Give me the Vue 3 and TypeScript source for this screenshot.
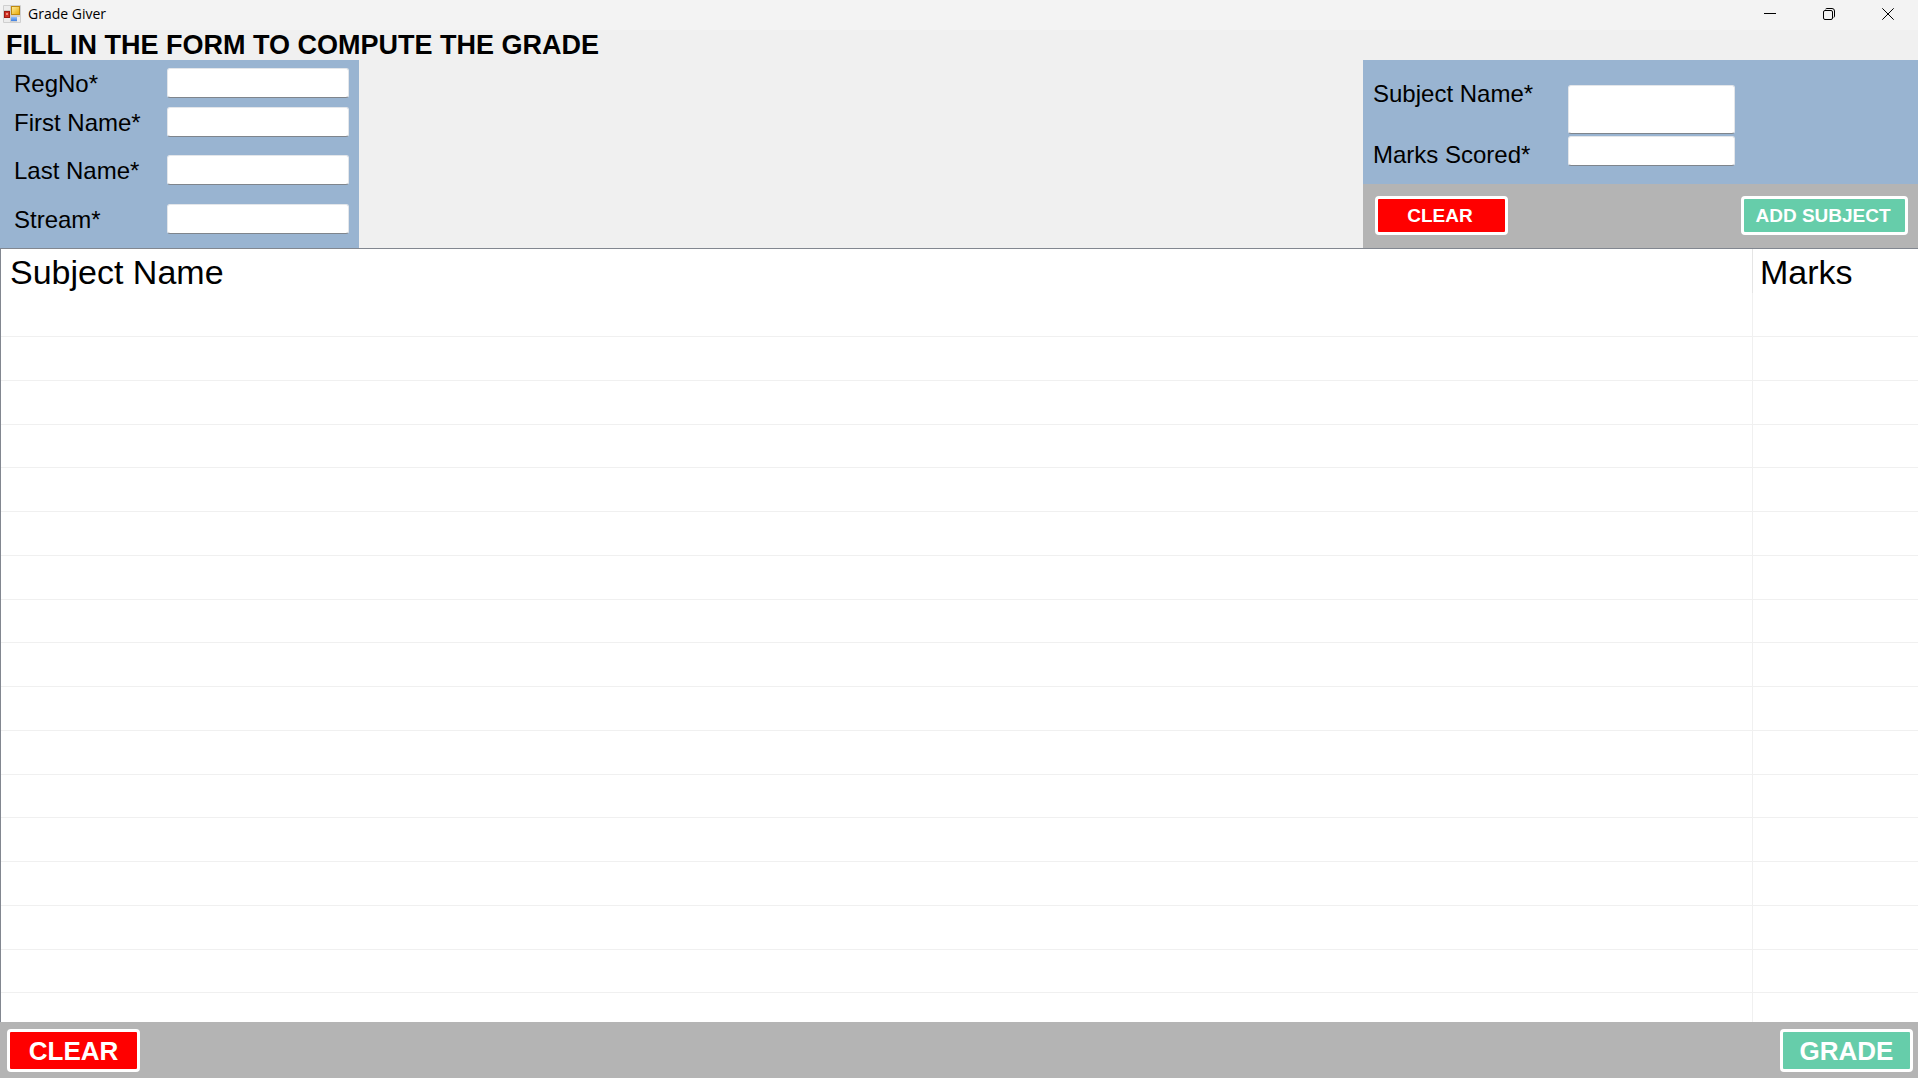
<script setup lang="ts">
import { reactive } from 'vue'

interface Field {
  id: 'regNo' | 'firstName' | 'lastName' | 'stream'
  label: string
}

const fields: Field[] = [
  { id: 'regNo', label: 'RegNo*' },
  { id: 'firstName', label: 'First Name*' },
  { id: 'lastName', label: 'Last Name*' },
  { id: 'stream', label: 'Stream*' },
]

const student = reactive({ regNo: '', firstName: '', lastName: '', stream: '' })
const subject = reactive({ name: '', marks: '' })
const subjects = reactive<{ name: string; marks: string }[]>([])
const rowCount = 17

function clearSubject() {
  subject.name = ''
  subject.marks = ''
}

function addSubject() {
  if (!subject.name || !subject.marks) return
  subjects.push({ name: subject.name, marks: subject.marks })
  clearSubject()
}

function clearAll() {
  Object.assign(student, { regNo: '', firstName: '', lastName: '', stream: '' })
  subjects.splice(0)
  clearSubject()
}
</script>

<template>
  <div class="window">
    <header class="titlebar">
      <svg class="app-icon" width="18" height="18" viewBox="0 0 18 18" aria-hidden="true">
        <defs>
          <linearGradient id="gold" x1="0" y1="0" x2="1" y2="1">
            <stop offset="0" stop-color="#fff0a0" />
            <stop offset="1" stop-color="#e8a800" />
          </linearGradient>
          <linearGradient id="sky" x1="0" y1="0" x2="0" y2="1">
            <stop offset="0" stop-color="#8fc0ff" />
            <stop offset="1" stop-color="#3f7fe0" />
          </linearGradient>
        </defs>
        <rect width="18" height="18" rx="1" fill="#cfcfcf" />
        <rect x="1" y="1" width="6" height="4" fill="#ececec" />
        <rect x="1" y="13" width="6" height="4" fill="#ececec" />
        <rect x="14" y="12" width="3" height="5" fill="#ececec" />
        <rect x="1.500" y="6.500" width="5" height="6" fill="#d03024" stroke="#9c1c14" />
        <rect x="3" y="8" width="2" height="2" fill="#f09080" />
        <rect x="8.500" y="1.500" width="8" height="8" fill="url(#gold)" stroke="#c08a10" />
        <rect x="8" y="12" width="6" height="4" fill="url(#sky)" />
      </svg>
      <span class="caption">Grade Giver</span>
      <div class="controls">
        <button type="button" aria-label="Minimize">
          <svg width="12" height="12" viewBox="0 0 12 12"><path d="M0 5.500H12" /></svg>
        </button>
        <button type="button" aria-label="Restore">
          <svg width="12" height="12" viewBox="0 0 12 12">
            <rect x="0.500" y="2.500" width="9" height="9" rx="1.500" />
            <path d="M2.500 1.200Q3 .5 4 .5H9Q11.500 .5 11.500 3V8Q11.500 9 10.800 9.500" />
          </svg>
        </button>
        <button type="button" aria-label="Close">
          <svg width="12" height="12" viewBox="0 0 12 12"><path d="M.3 .3L11.700 11.700M11.700 .3L.3 11.700" /></svg>
        </button>
      </div>
    </header>

    <h1>FILL IN THE FORM TO COMPUTE THE GRADE</h1>

    <div class="forms">
      <form class="student" @submit.prevent>
        <div v-for="field in fields" :key="field.id" class="field">
          <label :for="field.id">{{ field.label }}</label>
          <input :id="field.id" v-model="student[field.id]" type="text" />
        </div>
      </form>

      <form class="subject" @submit.prevent="addSubject">
        <div class="subject-fields">
          <label for="subjectName">Subject Name*</label>
          <textarea id="subjectName" v-model="subject.name"></textarea>
          <label class="marks-label" for="marks">Marks Scored*</label>
          <input id="marks" v-model="subject.marks" type="text" />
        </div>
        <div class="subject-actions">
          <button type="button" class="btn small red" @click="clearSubject">CLEAR</button>
          <button type="submit" class="btn small wide green">ADD SUBJECT</button>
        </div>
      </form>
    </div>

    <main class="list">
      <table>
        <thead>
          <tr>
            <th scope="col">Subject Name</th>
            <th scope="col" class="marks">Marks</th>
          </tr>
        </thead>
        <tbody>
          <tr v-for="n in rowCount" :key="n">
            <td>{{ subjects[n - 1]?.name }}</td>
            <td class="marks">{{ subjects[n - 1]?.marks }}</td>
          </tr>
        </tbody>
      </table>
    </main>

    <footer>
      <button type="button" class="btn red" @click="clearAll">CLEAR</button>
      <button type="button" class="btn green">GRADE</button>
    </footer>
  </div>
</template>

<style>
body {
  margin: 0;
  background: #f0f0f0;
}
</style>

<style scoped>
.window {
  display: flex;
  flex-direction: column;
  height: 100vh;
  background: #f0f0f0;
  color: #000;
  font-family: "Liberation Sans", Arial, sans-serif;
}

.window * {
  box-sizing: border-box;
}

.titlebar {
  display: flex;
  flex: none;
  align-items: center;
  height: 30px;
  padding: 0 1px 2px 3px;
  background: #f3f3f3;
}

.app-icon {
  margin-right: 7px;
}

.caption {
  font: 14px/28px "Open Sans", "Noto Sans", sans-serif;
}

.controls {
  display: flex;
  gap: 1px;
  margin-left: auto;
}

.controls button {
  display: flex;
  align-items: center;
  justify-content: center;
  width: 58px;
  height: 28px;
  padding: 0;
  border: 0;
  background: none;
}

.controls svg {
  fill: none;
  stroke: #000;
}

h1 {
  flex: none;
  margin: 0;
  padding-left: 6px;
  font-size: 27px;
  font-weight: 700;
  line-height: 30px;
}

.forms {
  display: flex;
  flex: none;
  justify-content: space-between;
}

.student {
  display: grid;
  grid-template-rows: 39px 48px 49px 52px;
  width: 359px;
  padding-left: 14px;
  background: #99b4d1;
}

.field {
  display: flex;
  align-items: flex-start;
  padding-top: 8px;
}

label {
  font-size: 24px;
  line-height: 32px;
}

.field label {
  width: 153px;
}

input,
textarea {
  display: block;
  height: 30px;
  padding: 2px 4px;
  border: 1px solid #e3e6ea;
  border-bottom-color: #7f858c;
  border-radius: 3px;
  outline: 0;
  background: #fff;
  font: 20px/24px "Liberation Sans", Arial, sans-serif;
  resize: none;
}

.field input {
  width: 182px;
}

.subject {
  width: 555px;
}

.subject-fields {
  display: grid;
  grid-template-columns: 195px 167px;
  grid-template-rows: 49px 30px;
  row-gap: 2px;
  height: 124px;
  padding: 25px 0 0 10px;
  background: #99b4d1;
}

.subject-fields label {
  line-height: 18px;
}

.subject-fields .marks-label {
  line-height: 38px;
}

.subject-fields textarea {
  height: 49px;
}

.subject-actions {
  display: flex;
  justify-content: space-between;
  height: 64px;
  padding: 12px 10px 0 12px;
  background: #b4b4b4;
}

.btn {
  width: 133px;
  height: 43px;
  padding: 0;
  border: 3px solid #fff;
  border-radius: 4px;
  color: #fff;
  font: 700 26px/36px "Liberation Sans", Arial, sans-serif;
}

.btn.small {
  height: 39px;
  padding-right: 3px;
  font-size: 19px;
  line-height: 32px;
}

.btn.wide {
  width: 167px;
}

.red {
  background: #f00;
}

.green {
  background: #66cdaa;
}

.list {
  flex: 1;
  min-height: 0;
  overflow: hidden;
  border-top: 1px solid #828790;
  border-left: 1px solid #828790;
  background: #fff;
}

table {
  width: 100%;
  border-collapse: separate;
  border-spacing: 0;
  table-layout: fixed;
}

th {
  height: 44px;
  padding: 2px 0 0 9px;
  font-size: 34px;
  font-weight: 400;
  line-height: 42px;
  text-align: left;
}

th.marks {
  width: 166px;
  padding-left: 7px;
  border-left: 1px solid #e5e5e5;
}

td {
  height: 44px;
  padding: 0 9px;
  border-bottom: 1px solid #f0f0f0;
  font-size: 34px;
  line-height: 42px;
}

tbody tr:nth-child(4n) td {
  height: 43px;
}

td.marks {
  border-left: 1px solid #f0f0f0;
}

footer {
  display: flex;
  flex: none;
  justify-content: space-between;
  height: 56px;
  padding: 7px 5px 0 7px;
  background: #b4b4b4;
}
</style>
